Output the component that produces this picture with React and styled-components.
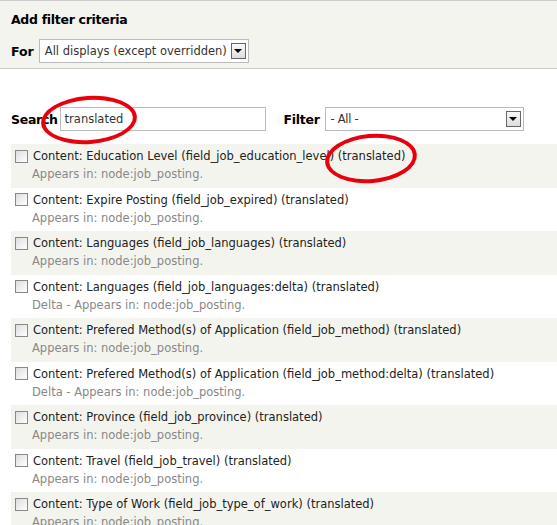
import React from "react";
import styled, { createGlobalStyle } from "styled-components";

const G = createGlobalStyle`
  html,body{margin:0;padding:0;background:#fff;overflow:hidden;}
  body{font-family:"DejaVu Sans",Verdana,sans-serif;font-size:12px;color:#000;}
`;
const Page = styled.div`position:relative;width:557px;height:525px;overflow:hidden;`;
const Header = styled.div`
  background:#f3f4ee;border-top:1px solid #ccc;border-bottom:1px solid #ccc;
  height:69px;padding:0 0 0 11px;box-sizing:border-box;
`;
const Title = styled.div`font-weight:bold;font-size:12.5px;padding-top:11px;height:27px;letter-spacing:-0.3px;`;
const ForRow = styled.div`display:flex;align-items:center;gap:5px;font-weight:bold;font-size:12.5px;`;
const Select = styled.div`
  display:flex;align-items:center;justify-content:space-between;box-sizing:border-box;white-space:nowrap;
  height:24px;width:${p=>p.w}px;border:1px solid #bbb;background:#fff;font-weight:normal;
  font-size:11.5px;padding:0 2px 0 5px;color:#333;
`;
const Arrow = styled.span`
  width:15px;height:16px;border:1px solid #666;background:linear-gradient(#fafafa,#ddd);
  display:flex;align-items:center;justify-content:center;box-sizing:border-box;
  &:after{content:"";border-left:4px solid transparent;border-right:4px solid transparent;border-top:4px solid #000;}
`;
const SearchRow = styled.div`display:flex;align-items:center;padding:38px 0 0 11px;height:24px;font-weight:bold;font-size:12.5px;letter-spacing:-0.3px;`;
const Input = styled.div`
  box-sizing:border-box;height:24px;width:206px;border:1px solid #bbb;margin-left:2px;letter-spacing:0;
  font-weight:normal;font-size:11.5px;padding:4px 4px;color:#333;
`;
const FilterLabel = styled.span`margin:0 5px 0 18px;`;
const List = styled.div`margin:13px 0 0 11px;`;
const Row = styled.div`
  background:${p=>p.alt?"#f3f4ee":"#fff"};height:43.5px;box-sizing:border-box;padding:5px 0 0 4px;
`;
const Main = styled.div`display:flex;align-items:center;gap:5px;font-size:11.5px;color:#222;`;
const Box = styled.span`width:11px;height:11px;border:1px solid #888;background:linear-gradient(135deg,#ddd,#fff);flex:none;`;
const Sub = styled.div`color:#888;font-size:11.5px;padding:4px 0 0 17px;`;
const Ellipse = styled.div`
  position:absolute;left:${p=>p.x}px;top:${p=>p.y}px;width:${p=>p.w}px;height:${p=>p.h}px;
  border:4px solid #e8000d;border-radius:50%;box-sizing:border-box;transform:rotate(${p=>p.r||0}deg);
`;

const items = [
  ["Content: Education Level (field_job_education_level) (translated)","Appears in: node:job_posting."],
  ["Content: Expire Posting (field_job_expired) (translated)","Appears in: node:job_posting."],
  ["Content: Languages (field_job_languages) (translated)","Appears in: node:job_posting."],
  ["Content: Languages (field_job_languages:delta) (translated)","Delta - Appears in: node:job_posting."],
  ["Content: Prefered Method(s) of Application (field_job_method) (translated)","Appears in: node:job_posting."],
  ["Content: Prefered Method(s) of Application (field_job_method:delta) (translated)","Delta - Appears in: node:job_posting."],
  ["Content: Province (field_job_province) (translated)","Appears in: node:job_posting."],
  ["Content: Travel (field_job_travel) (translated)","Appears in: node:job_posting."],
  ["Content: Type of Work (field_job_type_of_work) (translated)","Appears in: node:job_posting."],
];

export default function App(){
  return <Page><G/>
    <Header>
      <Title>Add filter criteria</Title>
      <ForRow>For<Select w={210}>All displays (except overridden)<Arrow/></Select></ForRow>
    </Header>
    <SearchRow>Search<Input>translated</Input><FilterLabel>Filter</FilterLabel><Select w={199}>- All -<Arrow/></Select></SearchRow>
    <List>
      {items.map((it,i)=><Row key={i} alt={i%2===0}><Main><Box/>{it[0]}</Main><Sub>{it[1]}</Sub></Row>)}
    </List>
    <Ellipse x={41} y={96} w={96} h={48} r={-4}/>
    <Ellipse x={325} y={134} w={92} h={49} r={-5}/>
  </Page>;
}
